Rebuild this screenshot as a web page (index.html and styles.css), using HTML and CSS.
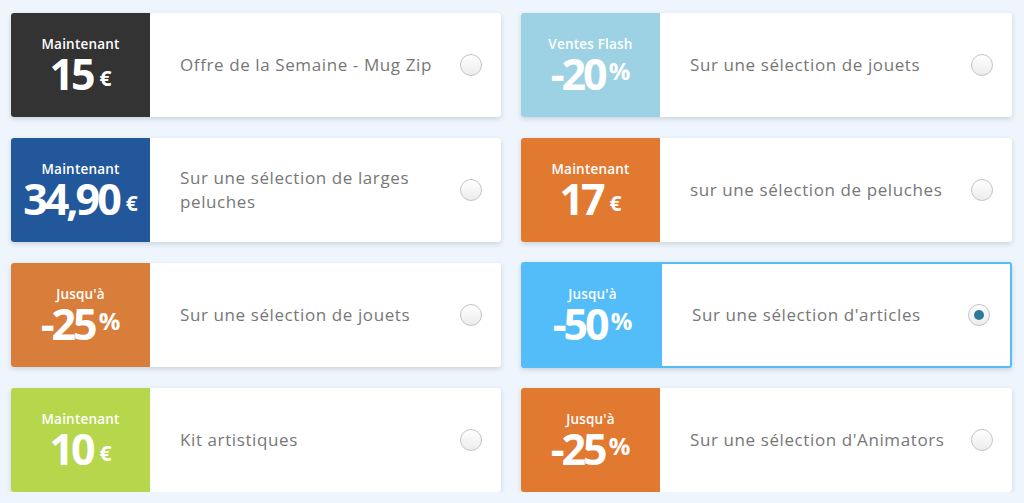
FILE: index.html
```html
<!DOCTYPE html>
<html lang="fr">
<head>
<meta charset="utf-8">
<title>Offres</title>
<link rel="stylesheet" href="styles.css">
</head>
<body>
<div class="grid">
  <label class="card">
    <div class="badge dark"><span class="kicker">Maintenant</span><span class="big">15<span class="unit">€</span></span></div>
    <div class="desc">Offre de la Semaine - Mug Zip</div>
    <span class="radio"></span>
  </label>
  <label class="card">
    <div class="badge sky"><span class="kicker">Ventes Flash</span><span class="big">-20<span class="pct">%</span></span></div>
    <div class="desc">Sur une sélection de jouets</div>
    <span class="radio"></span>
  </label>
  <label class="card">
    <div class="badge blue"><span class="kicker">Maintenant</span><span class="big">34,90<span class="unit">€</span></span></div>
    <div class="desc">Sur une sélection de larges peluches</div>
    <span class="radio"></span>
  </label>
  <label class="card">
    <div class="badge orange"><span class="kicker">Maintenant</span><span class="big">17<span class="unit">€</span></span></div>
    <div class="desc">sur une sélection de peluches</div>
    <span class="radio"></span>
  </label>
  <label class="card">
    <div class="badge orange2"><span class="kicker">Jusqu'à</span><span class="big">-25<span class="pct">%</span></span></div>
    <div class="desc">Sur une sélection de jouets</div>
    <span class="radio"></span>
  </label>
  <label class="card selected">
    <div class="badge cyan"><span class="kicker">Jusqu'à</span><span class="big">-50<span class="pct">%</span></span></div>
    <div class="desc">Sur une sélection d'articles</div>
    <span class="radio checked"></span>
  </label>
  <label class="card">
    <div class="badge green"><span class="kicker">Maintenant</span><span class="big">10<span class="unit">€</span></span></div>
    <div class="desc">Kit artistiques</div>
    <span class="radio"></span>
  </label>
  <label class="card">
    <div class="badge orange"><span class="kicker">Jusqu'à</span><span class="big">-25<span class="pct">%</span></span></div>
    <div class="desc">Sur une sélection d'Animators</div>
    <span class="radio"></span>
  </label>
</div>
</body>
</html>
```
FILE: styles.css
```css
html, body {
  margin: 0;
  padding: 0;
  background: #eef5fc;
}
body {
  padding: 13px 12px 0 11px;
  font-family: "Open Sans", "Liberation Sans", sans-serif;
}
.grid {
  display: grid;
  grid-template-columns: 490px 491px;
  column-gap: 20px;
  row-gap: 21px;
}
.card {
  display: flex;
  align-items: center;
  height: 104px;
  background: #ffffff;
  border-radius: 3px;
  box-shadow: 0 2px 5px rgba(40, 60, 90, 0.18);
  overflow: hidden;
  box-sizing: border-box;
}
.card.selected {
  border: 2px solid #55bef6;
  height: 106px;
  margin: -1px 0;
}
.badge {
  width: 139px;
  align-self: stretch;
  flex: none;
  display: flex;
  flex-direction: column;
  align-items: center;
  justify-content: center;
  color: #ffffff;
  padding-top: 1px;
  box-sizing: border-box;
}
.kicker {
  font-size: 13.5px;
  font-weight: 600;
  line-height: 16px;
  letter-spacing: 0.2px;
}
.big {
  font-size: 43px;
  font-weight: 700;
  line-height: 42px;
  letter-spacing: -3px;
  display: flex;
  align-items: flex-start;
  margin-top: 1px;
}
.unit {
  font-size: 21px;
  line-height: 21px;
  letter-spacing: 0;
  margin-left: 7px;
  margin-top: 15px;
}
.pct {
  font-size: 24px;
  line-height: 24px;
  letter-spacing: 0;
  margin-left: 4px;
  margin-top: 6px;
}
.dark { background: #333333; }
.sky { background: #9cd2e3; }
.blue { background: #22589b; }
.orange { background: #e17931; }
.orange2 { background: #d97e3a; }
.cyan { background: #52bdf8; }
.green { background: #b6d64b; }
.desc {
  flex: 1;
  padding-left: 30px;
  padding-right: 20px;
  font-size: 17px;
  line-height: 24px;
  color: #777777;
  letter-spacing: 0.6px;
}
.radio {
  flex: none;
  width: 20px;
  height: 20px;
  border-radius: 50%;
  border: 1px solid #c4c4c4;
  background: linear-gradient(#ffffff, #ececec);
  margin-right: 19px;
  display: flex;
  align-items: center;
  justify-content: center;
}
.selected .radio {
  margin-right: 20px;
}
.radio.checked::after {
  content: "";
  width: 10px;
  height: 10px;
  border-radius: 50%;
  background: #2f7a9a;
}
```
